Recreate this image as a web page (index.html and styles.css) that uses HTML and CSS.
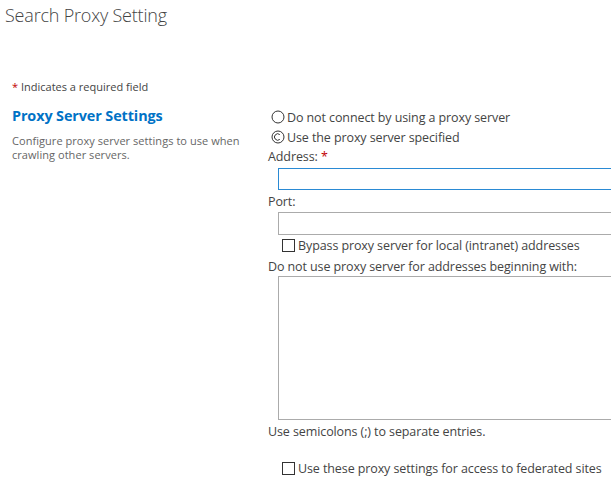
FILE: index.html
```html
<!DOCTYPE html>
<html>
<head>
<meta charset="utf-8">
<link rel="stylesheet" href="styles.css">
</head>
<body>
<div class="page">
  <h1 class="title">Search Proxy Setting</h1>
  <div class="required"><span class="star">*</span> Indicates a required field</div>
  <div class="section">
    <div class="left">
      <h2 class="heading">Proxy Server Settings</h2>
      <p class="desc">Configure proxy server settings to use when crawling other servers.</p>
    </div>
    <div class="right">
      <div class="row radio-row">
        <svg class="radio" width="14" height="14" viewBox="0 0 14 14"><circle cx="7" cy="7" r="6" fill="#fff" stroke="#333" stroke-width="1"/></svg>
        <span>Do not connect by using a proxy server</span>
      </div>
      <div class="row radio-row">
        <svg class="radio" width="14" height="14" viewBox="0 0 14 14"><circle cx="7" cy="7" r="6" fill="#fff" stroke="#333" stroke-width="1"/><path d="M8.8 4.6 A3.2 3.2 0 1 0 8.8 9.4" fill="none" stroke="#333" stroke-width="1"/></svg>
        <span>Use the proxy server specified</span>
      </div>
      <div class="label">Address: <span class="star">*</span></div>
      <div class="input focused"></div>
      <div class="label port">Port:</div>
      <div class="input port-input"></div>
      <div class="row check-row">
        <span class="checkbox"></span>
        <span>Bypass proxy server for local (intranet) addresses</span>
      </div>
      <div class="label bypass">Do not use proxy server for addresses beginning with:</div>
      <div class="textarea"></div>
      <div class="label hint">Use semicolons (;) to separate entries.</div>
      <div class="row check-row federated">
        <span class="checkbox"></span>
        <span>Use these proxy settings for access to federated sites</span>
      </div>
    </div>
  </div>
</div>
</body>
</html>
```
FILE: styles.css
```css
html, body {
  margin: 0;
  padding: 0;
  background: #fff;
  overflow: hidden;
}
body {
  font-family: "Open Sans", "Noto Sans", sans-serif;
  color: #444;
  width: 611px;
  height: 486px;
}
.title {
  margin: 0;
  padding: 2px 0 0 5px;
  font-size: 18px;
  font-weight: 300;
  line-height: 26px;
  color: #444;
  height: 77px;
  letter-spacing: -0.2px;
}
.required {
  padding-left: 12px;
  font-size: 11px;
  line-height: 16px;
  height: 16px;
  color: #444;
}
.star {
  color: #bf0000;
}
.section {
  display: flex;
  margin-top: 10px;
}
.left {
  width: 268px;
  padding-left: 12px;
  box-sizing: border-box;
  flex: none;
}
.heading {
  margin: 0;
  font-size: 14.4px;
  font-weight: 700;
  line-height: 22px;
  color: #0072c6;
  letter-spacing: -0.1px;
}
.desc {
  margin: 7px 0 0 0;
  font-size: 11px;
  line-height: 14px;
  color: #666;
  width: 240px;
  letter-spacing: 0.05px;
}
.right {
  flex: 1;
  min-width: 0;
  padding-top: 2px;
  font-size: 12.5px;
  letter-spacing: -0.1px;
}
.row {
  display: flex;
  align-items: center;
  height: 20px;
  white-space: nowrap;
}
.radio-row {
  padding-left: 3px;
}
.radio {
  flex: none;
  margin-right: 2px;
}
.label {
  line-height: 20px;
  height: 20px;
  white-space: nowrap;
}
.input {
  margin-left: 10px;
  margin-top: 1px;
  height: 22px;
  box-sizing: border-box;
  border: 1px solid #ababab;
  border-right: none;
  background: #fff;
}
.input.focused {
  border-color: #2a8ad4;
}
.label.port {
  margin-top: 2px;
}
.port-input {
  margin-top: 0;
  height: 23px;
}
.check-row {
  padding-left: 14px;
}
.checkbox {
  width: 11px;
  height: 11px;
  border: 1px solid #333;
  background: #fff;
  margin-right: 3px;
  flex: none;
}
.label.bypass {
  margin-top: 3px;
  line-height: 18px;
  height: 18px;
}
.textarea {
  margin-left: 10px;
  height: 144px;
  box-sizing: border-box;
  border: 1px solid #ababab;
  border-right: none;
  background: #fff;
}
.label.hint {
  margin-top: 2px;
}
.federated {
  margin-top: 16px;
}
```
